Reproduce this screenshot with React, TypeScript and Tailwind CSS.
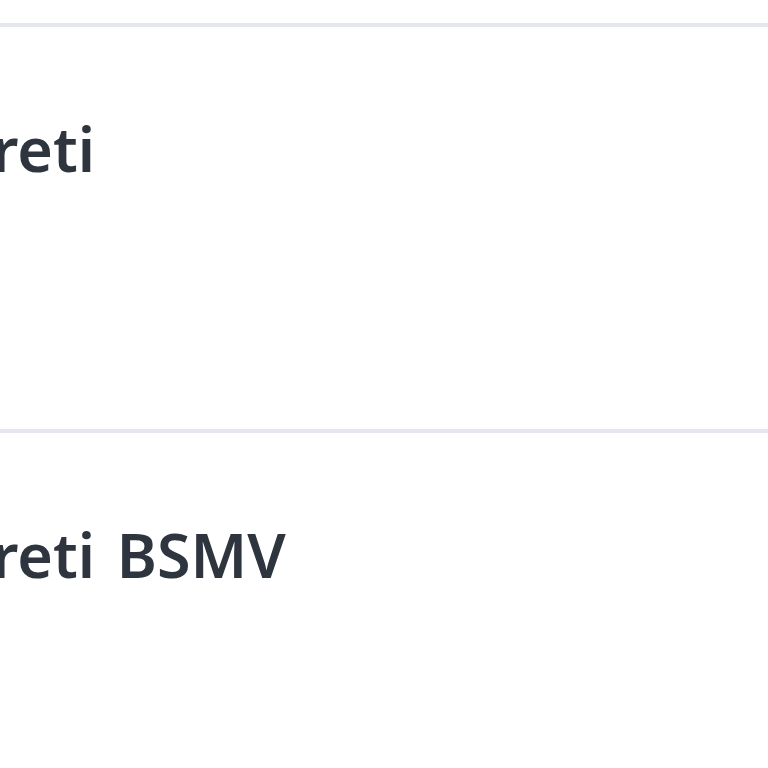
export default function App() {
  const rows = ["reti", "reti BSMV"];
  return (
    <div className="w-[768px] h-[768px] overflow-hidden bg-white" style={{ fontFamily: '"Noto Sans", "Open Sans", sans-serif' }}>
      <div className="h-[23px]" />
      {rows.map((t, i) => (
        <div key={i} className="border-t-4 border-[#e4e8ee] h-[406px] pt-[82px]">
          <div className="ml-[-8px] whitespace-nowrap text-[61px] leading-[80px] font-semibold text-[#2e353e] [word-spacing:6px]">{t}</div>
        </div>
      ))}
    </div>
  );
}
